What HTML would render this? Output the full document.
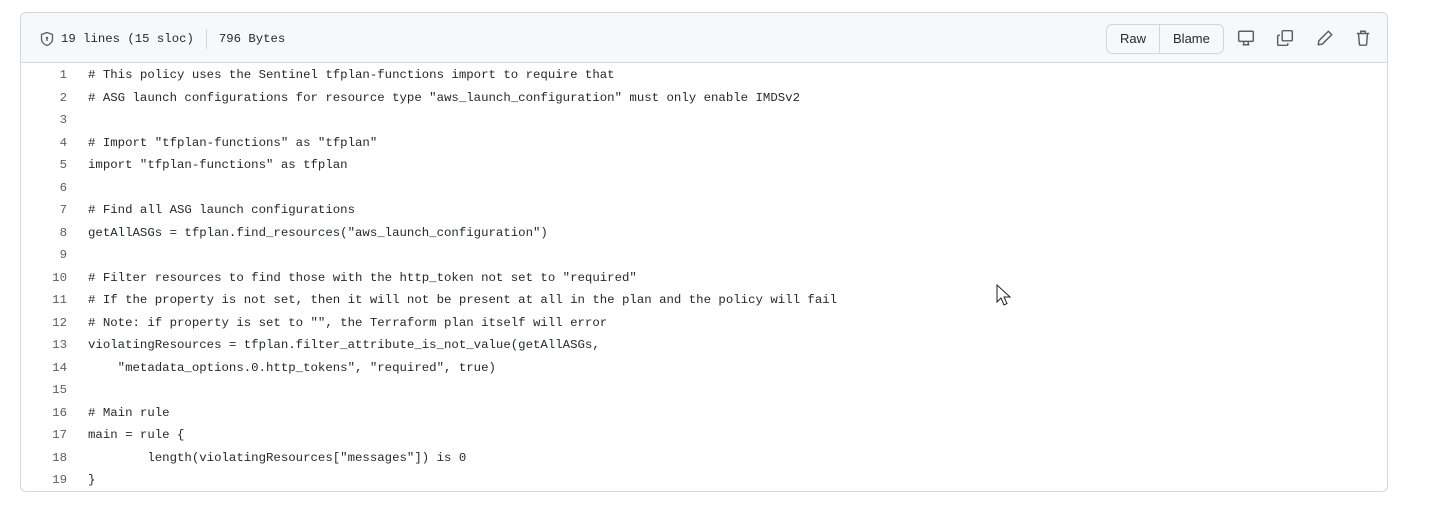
<!DOCTYPE html>
<html><head><meta charset="utf-8"><style>
body{margin:0;background:#fff;width:1436px;height:512px;overflow:hidden;font-family:"Liberation Sans",sans-serif}
.box{position:absolute;left:20px;top:12px;width:1366px;height:478px;border:1px solid #d0d7de;border-radius:6px;overflow:hidden}
.hdr{height:49px;background:#f6f8fa;border-bottom:1px solid #d0d7de;position:relative}
.info{position:absolute;left:18px;top:16px;font-family:"Liberation Mono",monospace;font-size:12.3px;color:#24292f;display:flex;align-items:center}
.sep{display:inline-block;width:1px;height:20px;background:#d0d7de;margin:0 12px}
.btns{position:absolute;left:1085px;top:11px;height:28px;border:1px solid #d0d7de;border-radius:6px;display:flex;font-size:13px;color:#24292f;background:#f6f8fa}
.btns div{padding:0 13px;line-height:28px}
.btns div+div{border-left:1px solid #d0d7de}
.ic{position:absolute;top:16px}
.code{font-family:"Liberation Mono",monospace;font-size:12.37px;color:#24292f;position:absolute;top:51px;left:0}
.l{height:22.5px;line-height:22.5px;white-space:pre;display:flex}
.n{width:46px;text-align:right;color:#57606a;padding-right:21px}
</style></head><body>
<div class="box">
<div class="hdr">
<div class="info"><svg width="16" height="16" viewBox="0 0 16 16" style="margin-right:6px"><path d="M8 1.5 L13.5 3.5 V8 C13.5 11 11 13.5 8 14.5 C5 13.5 2.5 11 2.5 8 V3.5 Z" fill="none" stroke="#57606a" stroke-width="1.3"/><circle cx="8" cy="7" r="1.2" fill="#57606a"/><path d="M8 7.5V10" stroke="#57606a" stroke-width="1.3"/></svg>19 lines (15 sloc)<span class="sep"></span>796 Bytes</div>
<div class="btns"><div>Raw</div><div>Blame</div></div>
<svg class="ic" style="left:1216px" width="18" height="18" viewBox="0 0 16 16"><rect x="1.5" y="2" width="13" height="9" rx="1" fill="none" stroke="#57606a" stroke-width="1.3"/><path d="M6 11v3h4v-3M5 14h6" fill="none" stroke="#57606a" stroke-width="1.3"/></svg>
<svg class="ic" style="left:1255px" width="18" height="18" viewBox="0 0 16 16"><rect x="5.5" y="1.5" width="9" height="9" rx="1" fill="none" stroke="#57606a" stroke-width="1.3"/><path d="M3.5 5.5h-1a1 1 0 0 0-1 1v7a1 1 0 0 0 1 1h7a1 1 0 0 0 1-1v-1" fill="none" stroke="#57606a" stroke-width="1.3"/></svg>
<svg class="ic" style="left:1295px" width="18" height="18" viewBox="0 0 16 16"><path d="M11 2l3 3-8.5 8.5-3.5.5.5-3.5z" fill="none" stroke="#57606a" stroke-width="1.3" stroke-linejoin="round"/></svg>
<svg class="ic" style="left:1333px" width="18" height="18" viewBox="0 0 16 16"><path d="M2.5 4h11M6 4V2h4v2M4 4l.8 9.5a1 1 0 0 0 1 .9h4.4a1 1 0 0 0 1-.9L12 4" fill="none" stroke="#57606a" stroke-width="1.3"/></svg>
</div>
<div class="code">
<div class="l"><span class="n">1</span># This policy uses the Sentinel tfplan-functions import to require that</div>
<div class="l"><span class="n">2</span># ASG launch configurations for resource type "aws_launch_configuration" must only enable IMDSv2</div>
<div class="l"><span class="n">3</span></div>
<div class="l"><span class="n">4</span># Import "tfplan-functions" as "tfplan"</div>
<div class="l"><span class="n">5</span>import "tfplan-functions" as tfplan</div>
<div class="l"><span class="n">6</span></div>
<div class="l"><span class="n">7</span># Find all ASG launch configurations</div>
<div class="l"><span class="n">8</span>getAllASGs = tfplan.find_resources("aws_launch_configuration")</div>
<div class="l"><span class="n">9</span></div>
<div class="l"><span class="n">10</span># Filter resources to find those with the http_token not set to "required"</div>
<div class="l"><span class="n">11</span># If the property is not set, then it will not be present at all in the plan and the policy will fail</div>
<div class="l"><span class="n">12</span># Note: if property is set to "", the Terraform plan itself will error</div>
<div class="l"><span class="n">13</span>violatingResources = tfplan.filter_attribute_is_not_value(getAllASGs,</div>
<div class="l"><span class="n">14</span>    "metadata_options.0.http_tokens", "required", true)</div>
<div class="l"><span class="n">15</span></div>
<div class="l"><span class="n">16</span># Main rule</div>
<div class="l"><span class="n">17</span>main = rule {</div>
<div class="l"><span class="n">18</span>        length(violatingResources["messages"]) is 0</div>
<div class="l"><span class="n">19</span>}</div>
</div>
</div>
<svg style="position:absolute;left:996px;top:284px" width="16" height="24" viewBox="0 0 16 24"><path d="M1 1v17l4-4 3 7 3-1.5-3-6.5h6z" fill="#fff" stroke="#222" stroke-width="1"/></svg>
</body></html>
